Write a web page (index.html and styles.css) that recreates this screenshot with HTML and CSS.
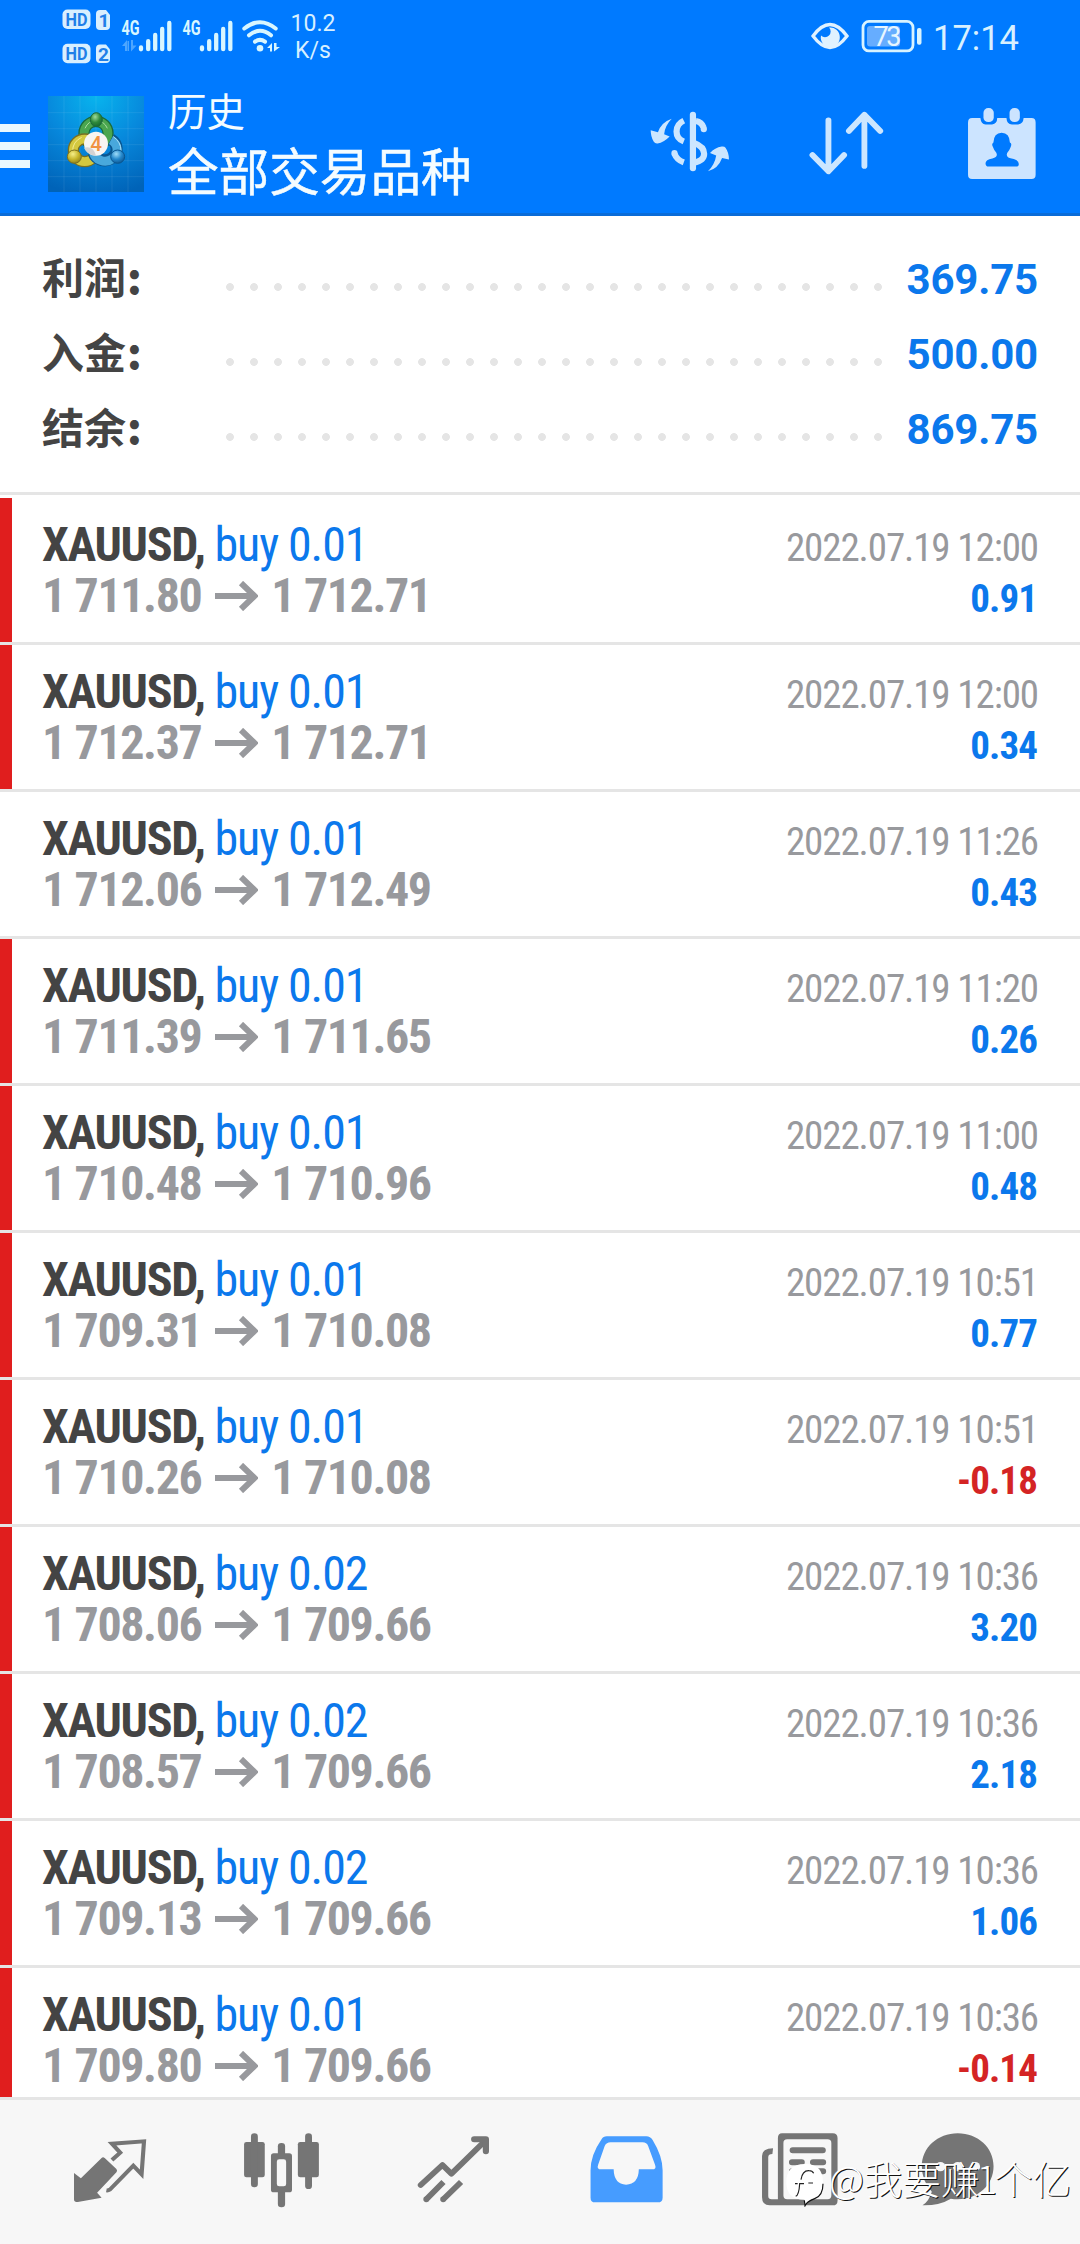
FILE: index.html
```html
<!DOCTYPE html>
<html lang="zh">
<head>
<meta charset="utf-8">
<title>历史</title>
<link rel="stylesheet" href="styles.css">
</head>
<body>
<header class="header">
  <div class="status">
    <svg class="status-left" width="290" height="72" viewBox="0 0 290 72">
      <g fill="#d8efff">
        <rect x="62.5" y="9.5" width="28" height="19.5" rx="5"/>
        <path d="M100 10h6l4 5v11a4 4 0 0 1-4 4h-6a4 4 0 0 1-4-4V14a4 4 0 0 1 4-4z"/>
        <rect x="62.5" y="43.8" width="28" height="19.5" rx="5"/>
        <path d="M100 44.5h6l4 5v9.500a4 4 0 0 1-4 4h-6a4 4 0 0 1-4-4V48.500a4 4 0 0 1 4-4z"/>
      </g>
      <g class="badge-text">
        <text x="65.500" y="26" textLength="22" lengthAdjust="spacingAndGlyphs">HD</text><text x="98.500" y="27">1</text>
        <text x="65.500" y="60.300" textLength="22" lengthAdjust="spacingAndGlyphs">HD</text><text x="98" y="61">2</text>
      </g>
      <g id="sig">
        <text class="net" x="121.500" y="34.800" textLength="18" lengthAdjust="spacingAndGlyphs">4G</text>
        <g stroke="#d8f6ff" stroke-width="4.300" stroke-linecap="round">
          <path d="M141 47.500v1.800M148.200 41.200v8M155.200 35v14.200M162.200 28.900v20.300M169.300 22.900v26.300"/>
        </g>
      </g>
      <use href="#sig" x="61"/>
      <path d="M122 46l5-6v11h-2v-5zM131 40v11.500l5.500-6h-3.500v-5.500zM127.500 41h1.500v10h-1.500z" fill="#4da6ff"/>
      <g fill="none" stroke="#d8f6ff" stroke-width="4" stroke-linecap="round">
        <path d="M244.300 28.500Q260 16 275.700 28.500M249 35.300Q260 26.300 271 35.300M255 41.700Q260 38 265 41.700"/>
      </g>
      <circle cx="260" cy="48.300" r="3.300" fill="#d8f6ff"/>
      <path d="M267 48l5-5v8.500h-2V48zM274 43v8.500l6-4.500h-3.500v-4z" fill="#d8f6ff"/>
    </svg>
    <div class="speed"><span>10.2</span><span>K/s</span></div>
    <svg class="status-right" width="112" height="34" viewBox="811 19 112 34">
      <path d="M813 36Q830 13 847 36Q830 59 813 36z" fill="none" stroke="#e0f2ff" stroke-width="3.300"/>
      <path d="M829 27.500a9.500 10 0 1 1-8 8a5 5 0 0 0 8-8z" fill="#e0f2ff"/>
      <rect x="863" y="21.400" width="50" height="29.500" rx="6" fill="none" stroke="#d8f3ff" stroke-width="2.800"/>
      <rect x="867" y="26" width="33" height="20.500" rx="3" fill="#66adff"/>
      <rect x="917" y="28" width="4.500" height="16.700" rx="2" fill="#d8f3ff"/>
      <text class="battery" x="873.500" y="45.500" textLength="28">73</text>
    </svg>
    <time class="clock">17:14</time>
  </div>
  <div class="toolbar">
    <div class="menu"><i></i><i></i><i></i></div>
    <svg class="logo" width="96" height="96" viewBox="24 48 288 288">
      <defs>
        <radialGradient id="sky" cx=".5" cy="0" r="1.050"><stop offset="0" stop-color="#08b4ee"/><stop offset=".5" stop-color="#0788dc"/><stop offset="1" stop-color="#0063b8"/></radialGradient>
        <radialGradient id="gg" cx=".4" cy=".3" r=".8"><stop offset="0" stop-color="#9fdc9a"/><stop offset=".5" stop-color="#2f8a3c"/><stop offset="1" stop-color="#11602c"/></radialGradient>
        <radialGradient id="yy" cx=".4" cy=".3" r=".8"><stop offset="0" stop-color="#f5ee8a"/><stop offset=".5" stop-color="#c8b72c"/><stop offset="1" stop-color="#82751a"/></radialGradient>
        <radialGradient id="bb" cx=".4" cy=".3" r=".8"><stop offset="0" stop-color="#9fdcf8"/><stop offset=".5" stop-color="#2488cc"/><stop offset="1" stop-color="#0a4d88"/></radialGradient>
      </defs>
      <rect x="24" y="48" width="288" height="288" fill="url(#sky)"/>
      <path d="M24 98H312M24 146H312M24 194H312M24 242H312M24 290H312M72 48V336M120 48V336M168 48V336M216 48V336M264 48V336" stroke="#fff" stroke-opacity=".12" stroke-width="2"/>
      <circle cx="168" cy="160" r="36" fill="none" stroke="#1b6a3a" stroke-width="34"/>
      <circle cx="168" cy="160" r="36" fill="none" stroke="#4aa64f" stroke-width="26"/>
      <circle cx="134" cy="211" r="34" fill="none" stroke="#786f22" stroke-width="34"/>
      <circle cx="134" cy="211" r="34" fill="none" stroke="#d3c83f" stroke-width="26"/>
      <path d="M160 218A36 34 0 1 0 213 178" fill="none" stroke="#0a5690" stroke-width="36"/>
      <path d="M160 216A36 34 0 1 0 213 180" fill="none" stroke="#48a8dc" stroke-width="27"/>
      <path d="M135 145Q145 122 168 122Q192 122 202 145" fill="none" stroke="#a9dca0" stroke-width="3"/>
      <path d="M98 215Q97 185 125 172" fill="none" stroke="#f3ec94" stroke-width="3"/>
      <path d="M220 170Q243 186 243 212" fill="none" stroke="#a9def5" stroke-width="3"/>
      <ellipse cx="169" cy="119" rx="18" ry="21" fill="url(#gg)" stroke="#1b6a3a" stroke-width="3"/>
      <ellipse cx="103" cy="230" rx="21" ry="20" fill="url(#yy)" stroke="#7a6f20" stroke-width="3"/>
      <ellipse cx="233" cy="230" rx="21" ry="20" fill="url(#bb)" stroke="#0a5690" stroke-width="3"/>
      <circle cx="168" cy="191" r="36" fill="#f7f5f2"/>
      <path d="M132 203Q160 196 168 227Q140 224 132 203z" fill="#d5d3d3"/>
      <text class="four" x="168" y="212" text-anchor="middle">4</text>
    </svg>
    <div class="titles">
      <div class="title">历史</div>
      <div class="subtitle">全部交易品种</div>
    </div>
    <svg class="ic-dollar" width="80" height="61" viewBox="320 334 232 184" preserveAspectRatio="none">
      <g fill="none" stroke="#cce6ff" stroke-width="18">
        <path d="M444.500 345V507" stroke-linecap="round"/>
        <path d="M418 363Q397 373 397 396Q397 418 418 426"/>
        <path d="M453 364Q470 367 475 383"/><path d="M476 387v2" stroke-linecap="round"/>
        <path d="M447 430Q477 441 477 463Q477 484 447 490"/>
        <path d="M418 489Q398 482 391 463"/><path d="M391 461v1" stroke-linecap="round"/>
      </g>
      <path d="M383 357Q352 368 343 398L322 392Q322 412 331 427Q335 433 342 432Q360 429 377 411L361 404Q363 378 383 357zM488 516Q518 508 529 476L549 480Q549 460 539 445Q536 440 528 441Q508 444 494 461L512 468Q508 495 488 516z" fill="#cce6ff"/>
    </svg>
    <svg class="ic-sort" width="75" height="64" viewBox="780 334 218 192" preserveAspectRatio="none">
      <path d="M836.500 362V515M790 466L836.500 515L882 466M941 499V346M896 394L941 345L987 394" fill="none" stroke="#cce6ff" stroke-width="17" stroke-linecap="round" stroke-linejoin="round"/>
    </svg>
    <svg class="ic-calendar" width="70" height="73" viewBox="1240 320 204 218" preserveAspectRatio="none">
      <path d="M1255 353H1279Q1281 372 1294 372H1313Q1328 370 1328 353H1355Q1356 372 1371 372H1389Q1404 370 1405 353H1428Q1440 353 1440 366V522Q1440 535 1428 535H1255Q1243 535 1243 522V366Q1243 353 1255 353z" fill="#cce4ff"/>
      <rect x="1283" y="318" width="40" height="52" rx="18" fill="#007aff"/><rect x="1359" y="318" width="40" height="52" rx="18" fill="#007aff"/>
      <rect x="1288" y="323" width="30" height="42" rx="14" fill="#cce4ff"/><rect x="1364" y="323" width="30" height="42" rx="14" fill="#cce4ff"/>
      <path d="M1341 397Q1364 398 1365 426Q1372 429 1367 440Q1364 449 1357 457Q1352 470 1370 474Q1391 478 1391 490Q1391 498 1382 498H1303Q1294 498 1294 488Q1294 478 1314 474Q1332 469 1325 456Q1319 450 1315 438Q1311 430 1317 426Q1318 398 1341 397z" fill="#007aff"/>
    </svg>
  </div>
</header>

<section class="summary">
  <div class="sum-row"><span class="label">利润<b>:</b></span><span class="dots"></span><span class="sum">369.75</span></div>
  <div class="sum-row"><span class="label">入金<b>:</b></span><span class="dots"></span><span class="sum">500.00</span></div>
  <div class="sum-row"><span class="label">结余<b>:</b></span><span class="dots"></span><span class="sum">869.75</span></div>
</section>

<main class="list" id="list"></main>

<nav class="nav">
  <svg viewBox="203.400 215 232 228" preserveAspectRatio="none" class="tab">
    <path d="M295 293Q299 289 304 293L338 326Q342 331 338 336L282 397L295 412L226 425Q215 427 215 417V338L235 354z"/>
    <path d="M309 390Q314 391 320 387L387 316L411 342L418 243L325 250L349 277L325 299" fill="none" stroke="#757575" stroke-width="12"/>
  </svg>
  <svg viewBox="703 215 232 228" preserveAspectRatio="none" class="tab">
    <rect x="709" y="245" width="60" height="106" rx="7"/><rect x="729" y="219" width="20" height="162" rx="10"/>
    <rect x="865" y="245" width="61" height="106" rx="7"/><rect x="886" y="219" width="20" height="167" rx="10"/>
    <rect x="807" y="248" width="21" height="45" rx="10"/><rect x="807" y="380" width="21" height="61" rx="10"/>
    <path fill-rule="evenodd" d="M795 279H840Q848 279 848 287V388Q848 396 840 396H795Q787 396 787 388V287Q787 279 795 279zM811 297Q804 297 804 304V371Q804 378 811 378H824Q831 378 831 371V304Q831 297 824 297z"/>
  </svg>
  <svg viewBox="1202.500 215 232 228" preserveAspectRatio="none" class="tab">
    <g fill="none" stroke="#757575" stroke-width="17" stroke-linejoin="round">
      <path d="M1222 374L1285 314L1311 340L1409 241" stroke-linecap="round"/>
      <path d="M1377 237H1411V273" stroke-width="18" stroke-linecap="round"/>
      <path d="M1288 365L1237 418M1339 365L1286 418"/><path d="M1238 417h0M1287 417h0" stroke-linecap="round"/>
    </g>
  </svg>
  <svg viewBox="133.800 215 232 228" preserveAspectRatio="none" class="tab active">
    <path fill-rule="evenodd" d="M194 228H309Q320 228 327 239Q356 288 356 330V412Q356 426 342 426H160Q147 426 147 412V330Q147 284 178 238Q184 228 194 228zM205 246Q193 246 188 257L169 313Q164 327 178 327H214Q215 372 250 373Q286 372 287 327H326Q339 327 334 313L314 257Q310 246 298 246z"/>
  </svg>
  <svg viewBox="633.300 215 232 228" preserveAspectRatio="none" class="tab">
    <path fill-rule="evenodd" d="M703 219H850Q864 219 864 233V421Q864 435 850 435H667Q645 435 645 411V287Q645 264 677 264L675 281Q663 281 663 291V407Q663 417 673 417H691V233Q691 219 703 219zM718 237Q707 237 707 248V405Q707 417 718 417H835Q846 417 846 405V248Q846 237 835 237z"/>
    <path d="M734 269.500H821M732 306H760M793 306H822M732 333H760M793 333H822" stroke="#757575" stroke-width="18" stroke-linecap="round"/>
  </svg>
  <svg viewBox="1097.900 215 232 228" preserveAspectRatio="none" class="tab">
    <path d="M1213 219C1272 219 1317 262 1317 318S1272 417 1213 417Q1202 417 1193 415Q1160 436 1111 435Q1130 422 1138 394Q1109 362 1109 318C1109 262 1155 219 1213 219z"/>
    <circle cx="1163" cy="319" r="14" fill="#f7f7f7"/><circle cx="1213" cy="319" r="14" fill="#f7f7f7"/><circle cx="1264" cy="319" r="14" fill="#f7f7f7"/>
  </svg>
  <div class="mark">
    <svg width="39" height="44" viewBox="46 130 117 132">
      <path d="M105 133Q160 132 160 188Q160 226 135 236Q112 244 106 257Q102 250 104 240Q50 240 50 187Q50 134 105 133z" fill="#fff"/>
      <path d="M160 192Q160 228 135 237Q112 245 106 258L104 242" fill="none" stroke="#111" stroke-width="3.500"/>
      <path d="M78 230Q88 226 90 192H103M76 192H84M116 190H130M94 180Q98 152 118 153Q128 153 132 161" fill="none" stroke="#222" stroke-width="3.500"/>
    </svg>
    <span>@我要赚<b>1</b>个亿</span>
  </div>
</nav>
<script src="app.js"></script>
</body>
</html>
```
FILE: styles.css
```css
* { box-sizing: border-box; }
body {
  margin: 0;
  width: 1080px;
  height: 2244px;
  overflow: hidden;
  display: flex;
  flex-direction: column;
  background: #fff;
  font-family: Roboto, "Noto Sans CJK SC", sans-serif;
}
svg { display: block; flex: none; }

.header {
  height: 216px;
  flex: none;
  background: #007aff;
  border-bottom: 3px solid #0a6cd8;
}
.status { display: flex; height: 72px; }
.badge-text { font-size: 19px; font-weight: 700; fill: #1f7fe8; }
.badge-text text { font-family: Roboto, sans-serif; }
.net { font-size: 20px; font-weight: 700; fill: #d8f6ff; }
.speed {
  width: 46px;
  padding-top: 10px;
  display: flex;
  flex-direction: column;
  align-items: center;
  font-size: 23px;
  line-height: 27px;
  color: #d8f0ff;
}
.status-right { margin: 19px 0 0 475px; }
.battery { font-size: 27px; fill: #e6f6ff; }
.clock { margin: 18px 0 0 10px; font-size: 34.5px; line-height: 41px; color: #d8f0ff; }

.toolbar { display: flex; height: 141px; }
.menu { width: 30px; margin-top: 52px; display: flex; flex-direction: column; gap: 10px; }
.menu i { height: 8px; background: #eaf8ff; }
.logo { margin: 24px 0 0 18px; }
.four { font-size: 62px; font-weight: 500; fill: #f09242; }
.titles { width: 482px; margin-left: 24px; padding-top: 19px; color: #f4fcff; }
.title { font-size: 38.5px; line-height: 44px; }
.subtitle { font-size: 50.6px; line-height: 56px; margin-top: 11px; -webkit-text-stroke: .5px #f4fcff; }
.ic-dollar { margin-top: 39px; }
.ic-sort { margin: 39px 0 0 79px; }
.ic-calendar { margin: 35px 0 0 83px; }

.summary { height: 279px; flex: none; padding: 26px 42px 0; border-bottom: 3px solid #e5e5e5; }
.sum-row { display: flex; height: 75px; align-items: baseline; line-height: 75px; font-size: 42px; font-weight: 700; }
.label { width: 176px; color: #444; }
.label b { margin-left: 1px; font-family: "Noto Sans CJK SC", sans-serif; line-height: 1; }
.dots {
  width: 672px;
  height: 75px;
  align-self: flex-start;
  background: radial-gradient(circle at 12px 45px, #e5e5e5 3.500px, transparent 4.300px) 0 0 / 24px 75px;
}
.sum { margin-left: auto; letter-spacing: -.2px; color: #0b78ec; }

.list { flex: none; height: 1602px; padding-top: 3px; overflow: hidden; }
.row { height: 147px; border-bottom: 3px solid #e5e5e5; padding: 21px 42px 0; }
.row.flag { background: linear-gradient(#e01e1e, #e01e1e) 0 0 / 12px 144px no-repeat; }
.line { display: flex; height: 51px; line-height: 51px; align-items: baseline; font-size: 48px; font-stretch: 75%; font-family: "Roboto Condensed", Roboto, sans-serif; white-space: pre; }
.symbol { font-weight: 700; letter-spacing: -1.3px; color: #444; }
.side { letter-spacing: -1.1px; color: #0b78ec; }
.price { font-weight: 700; letter-spacing: -1.4px; color: #98999d; }
.arrow { margin: 0 13px 0 14px; align-self: center; }
.time { margin: 0 0 0 auto; font-size: 39px; letter-spacing: -1.1px; color: #98999d; }
.gain { margin: 0 1px 0 auto; font-size: 39px; font-weight: 700; letter-spacing: -.9px; color: #0b78ec; }
.gain.loss { color: #d42424; }

.nav {
  position: relative;
  flex: none;
  height: 147px;
  padding: 32px 0 0 24px;
  display: grid;
  grid-template-columns: repeat(5, 172px) 148px;
  justify-items: center;
  align-items: start;
  background: #f7f7f7;
  border-top: 3px solid #e5e5e5;
}
.tab { width: 80px; height: 76px; fill: #757575; }
.active { fill: #469cff; }
.mark { position: absolute; left: 785px; top: 63px; display: flex; align-items: flex-start; }
.mark span { margin: -13px 0 0 5px; font-size: 38.5px; line-height: 54px; font-weight: 300; font-family: "Noto Sans CJK SC", sans-serif; color: #fff; text-shadow: 1px 1px 0 #111; white-space: nowrap; }
.mark b { font-weight: 300; margin: 0 -3px; }
```
FILE: app.js
```js
const deals = [
  ['0.01', '1 711.80', '1 712.71', '12:00', '0.91', true],
  ['0.01', '1 712.37', '1 712.71', '12:00', '0.34', true],
  ['0.01', '1 712.06', '1 712.49', '11:26', '0.43', false],
  ['0.01', '1 711.39', '1 711.65', '11:20', '0.26', true],
  ['0.01', '1 710.48', '1 710.96', '11:00', '0.48', true],
  ['0.01', '1 709.31', '1 710.08', '10:51', '0.77', true],
  ['0.01', '1 710.26', '1 710.08', '10:51', '-0.18', true],
  ['0.02', '1 708.06', '1 709.66', '10:36', '3.20', true],
  ['0.02', '1 708.57', '1 709.66', '10:36', '2.18', true],
  ['0.02', '1 709.13', '1 709.66', '10:36', '1.06', true],
  ['0.01', '1 709.80', '1 709.66', '10:36', '-0.14', true]
];
document.getElementById('list').innerHTML = deals.map(([vol, open, close, time, gain, flag]) => `
  <article class="row${flag ? ' flag' : ''}">
    <div class="line"><span class="symbol">XAUUSD, </span><span class="side">buy ${vol}</span><span class="time">2022.07.19 ${time}</span></div>
    <div class="line"><span class="price">${open}</span><svg class="arrow" width="43" height="30" viewBox="0 0 43 30"><path d="M0 15H39M26 2L39.500 15L26 28" fill="none" stroke="#98999d" stroke-width="6"/></svg><span class="price">${close}</span><span class="gain${gain[0] === '-' ? ' loss' : ''}">${gain}</span></div>
  </article>`).join('');
```
